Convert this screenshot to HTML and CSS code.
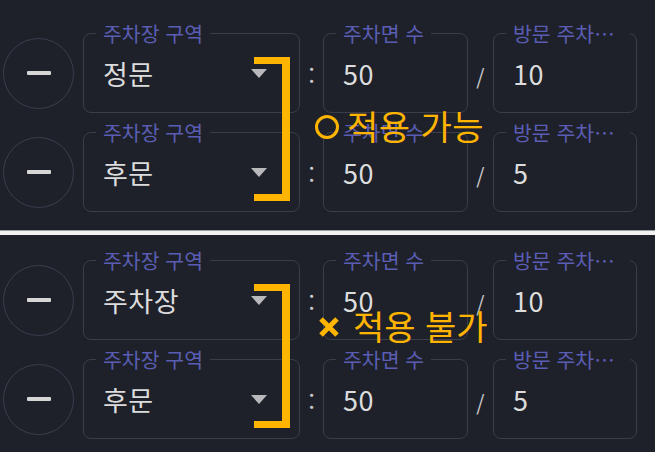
FILE: index.html
```html
<!DOCTYPE html>
<html lang="ko">
<head>
    <meta charset="UTF-8">
    <title>주차장 구역 설정</title>
    <link rel="stylesheet" href="styles.css">
</head>
<body>

    <!-- 적용 가능 예시 -->
    <section class="panel panel-first">
        <div class="rows">
            <div class="row">
                <button class="remove-btn"><span class="minus"></span></button>
                <div class="field field-zone">
                    <span class="field-label">주차장 구역</span>
                    <span class="field-value">정문</span>
                    <span class="caret"></span>
                </div>
                <span class="sep sep-colon">:</span>
                <div class="field field-count">
                    <span class="field-label">주차면 수</span>
                    <span class="field-value">50</span>
                </div>
                <span class="sep sep-slash">/</span>
                <div class="field field-visit">
                    <span class="field-label">방문 주차면 수</span>
                    <span class="field-value">10</span>
                </div>
            </div>
            <div class="row">
                <button class="remove-btn"><span class="minus"></span></button>
                <div class="field field-zone">
                    <span class="field-label">주차장 구역</span>
                    <span class="field-value">후문</span>
                    <span class="caret"></span>
                </div>
                <span class="sep sep-colon">:</span>
                <div class="field field-count">
                    <span class="field-label">주차면 수</span>
                    <span class="field-value">50</span>
                </div>
                <span class="sep sep-slash">/</span>
                <div class="field field-visit">
                    <span class="field-label">방문 주차면 수</span>
                    <span class="field-value">5</span>
                </div>
            </div>

            <div class="bracket"></div>
            <div class="note note-ok">
                <span class="mark-ok"></span>
                <span>적용 가능</span>
            </div>
        </div>
    </section>

    <div class="divider"></div>

    <!-- 적용 불가 예시 -->
    <section class="panel panel-second">
        <div class="rows">
            <div class="row">
                <button class="remove-btn"><span class="minus"></span></button>
                <div class="field field-zone">
                    <span class="field-label">주차장 구역</span>
                    <span class="field-value">주차장</span>
                    <span class="caret"></span>
                </div>
                <span class="sep sep-colon">:</span>
                <div class="field field-count">
                    <span class="field-label">주차면 수</span>
                    <span class="field-value">50</span>
                </div>
                <span class="sep sep-slash">/</span>
                <div class="field field-visit">
                    <span class="field-label">방문 주차면 수</span>
                    <span class="field-value">10</span>
                </div>
            </div>
            <div class="row">
                <button class="remove-btn"><span class="minus"></span></button>
                <div class="field field-zone">
                    <span class="field-label">주차장 구역</span>
                    <span class="field-value">후문</span>
                    <span class="caret"></span>
                </div>
                <span class="sep sep-colon">:</span>
                <div class="field field-count">
                    <span class="field-label">주차면 수</span>
                    <span class="field-value">50</span>
                </div>
                <span class="sep sep-slash">/</span>
                <div class="field field-visit">
                    <span class="field-label">방문 주차면 수</span>
                    <span class="field-value">5</span>
                </div>
            </div>

            <div class="bracket"></div>
            <div class="note note-fail">
                <svg class="mark-fail" viewBox="0 0 22 20" width="22" height="20">
                    <path d="M3 2 L19 18 M19 2 L3 18" stroke="#ffb400" stroke-width="5" stroke-linecap="butt"/>
                </svg>
                <span>적용 불가</span>
            </div>
        </div>
    </section>

</body>
</html>
```

FILE: styles.css
```css
/* Global Styles */
* {
    margin: 0;
    padding: 0;
    box-sizing: border-box;
    font-family: 'Noto Sans CJK KR', 'Noto Sans', sans-serif;
}

body {
    background: #1e212a;
    color: #dcdcdc;
    width: 655px;
    overflow: hidden;
}

/* PANELS */
.panel {
    background: #1e212a;
    padding-left: 3px;
}

.panel-first {
    height: 230px;
    padding-top: 33px;
}

.panel-second {
    height: 217px;
    padding-top: 25px;
}

.divider {
    height: 5px;
    background: #f2f2f2;
    border-top: 1px solid #9a9ca3;
}

.rows {
    position: relative;
    display: flex;
    flex-direction: column;
    gap: 19px;
}

.row {
    display: flex;
    align-items: center;
}

/* REMOVE BUTTON */
.remove-btn {
    width: 71px;
    height: 71px;
    border-radius: 50%;
    border: 1px solid #3a3e4e;
    background: transparent;
    display: flex;
    justify-content: center;
    align-items: center;
    margin-right: 9px;
}

.minus {
    width: 24px;
    height: 4px;
    background: #d6d6d6;
    border-radius: 1px;
}

/* OUTLINED FIELDS */
.field {
    position: relative;
    height: 80px;
    border: 1px solid #393d4c;
    border-radius: 8px;
    display: flex;
    align-items: center;
    padding: 0 19px;
}

.field-zone {
    width: 217px;
}

.field-count {
    width: 145px;
}

.field-visit {
    width: 144px;
}

.field-label {
    position: absolute;
    top: -13px;
    left: 12px;
    max-width: calc(100% - 18px);
    padding: 0 7px;
    background: #1e212a;
    color: #5a5db3;
    font-size: 20.5px;
    line-height: 24px;
    white-space: nowrap;
    overflow: hidden;
    text-overflow: ellipsis;
}

.field-value {
    font-size: 27px;
    color: #dcdcdc;
    letter-spacing: 0.5px;
}

.caret {
    position: absolute;
    right: 32px;
    top: 35px;
    width: 0;
    height: 0;
    border-left: 8px solid transparent;
    border-right: 8px solid transparent;
    border-top: 9px solid #b9b9bb;
}

/* SEPARATORS */
.sep {
    display: flex;
    justify-content: center;
    color: #c8c8c8;
}

.sep-colon {
    width: 23px;
    font-size: 24px;
    padding-top: 2px;
}

.sep-slash {
    width: 25px;
    font-size: 21px;
    padding-top: 8px;
}

/* ANNOTATIONS */
.bracket {
    position: absolute;
    left: 251px;
    top: 24px;
    width: 36px;
    height: 144px;
    border: 8px solid #ffb400;
    border-left: none;
    border-top-width: 7.5px;
    border-bottom-width: 7.5px;
}

.note {
    position: absolute;
    left: 312px;
    display: flex;
    align-items: center;
    color: #ffb400;
    font-size: 34px;
    line-height: 1;
    white-space: nowrap;
}

.note-ok {
    top: 76px;
    letter-spacing: 0.5px;
}

.note-fail {
    top: 49px;
}

.mark-ok {
    width: 24px;
    height: 24px;
    border: 3px solid #ffb400;
    border-radius: 50%;
    margin: 1px 8px 0 0;
}

.mark-fail {
    margin: 2px 13px 0 3px;
}
```
